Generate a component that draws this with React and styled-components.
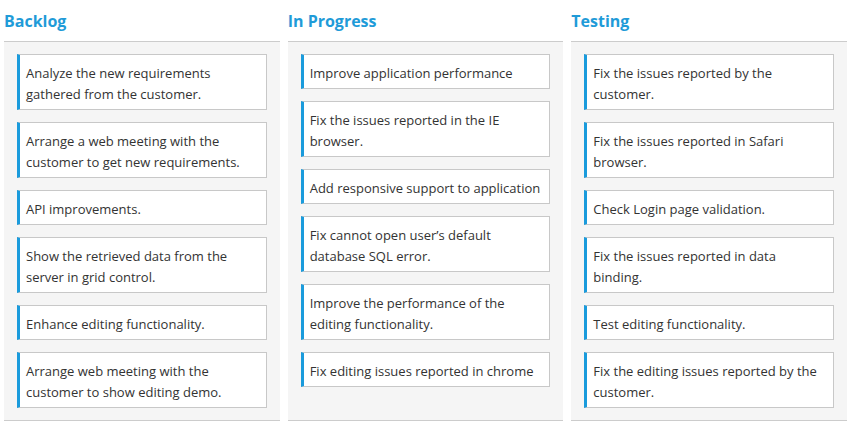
import React from "react";
import styled, { createGlobalStyle } from "styled-components";

const GlobalStyle = createGlobalStyle`
  body {
    margin: 0;
    background: #ffffff;
    font-family: "Open Sans", "Noto Sans", sans-serif;
  }
`;

const Board = styled.div`
  display: grid;
  grid-template-columns: repeat(3, 1fr);
  column-gap: 8px;
  padding: 0 4px;
`;

const Column = styled.section`
  display: flex;
  flex-direction: column;
  min-width: 0;
`;

const Header = styled.h3`
  margin: 0;
  height: 41px;
  padding-top: 10px;
  box-sizing: border-box;
  font-size: 16px;
  line-height: 22px;
  font-weight: 700;
  color: #1f9bd8;
`;

const Body = styled.div`
  background-color: #f5f5f5;
  border-top: 1px solid #cccccc;
  border-bottom: 1px solid #cccccc;
  height: 380px;
  box-sizing: border-box;
  padding: 12px 13px 12px 13px;
  display: flex;
  flex-direction: column;
  gap: 12px;
`;

const Card = styled.div`
  background-color: #ffffff;
  border: 1px solid #c8c8c8;
  border-left: 3px solid #1a9bdc;
  padding: 8px 8px 4px 6px;
  font-size: 13px;
  line-height: 21px;
  color: #333333;
`;

const columns = [
  {
    title: "Backlog",
    cards: [
      "Analyze the new requirements gathered from the customer.",
      "Arrange a web meeting with the customer to get new requirements.",
      "API improvements.",
      "Show the retrieved data from the server in grid control.",
      "Enhance editing functionality.",
      "Arrange web meeting with the customer to show editing demo.",
    ],
  },
  {
    title: "In Progress",
    cards: [
      "Improve application performance",
      "Fix the issues reported in the IE browser.",
      "Add responsive support to application",
      "Fix cannot open user\u2019s default database SQL error.",
      "Improve the performance of the editing functionality.",
      "Fix editing issues reported in chrome",
    ],
  },
  {
    title: "Testing",
    cards: [
      "Fix the issues reported by the customer.",
      "Fix the issues reported in Safari browser.",
      "Check Login page validation.",
      "Fix the issues reported in data binding.",
      "Test editing functionality.",
      "Fix the editing issues reported by the customer.",
    ],
  },
];

export default function App() {
  return (
    <>
      <GlobalStyle />
      <Board>
        {columns.map((col) => (
          <Column key={col.title}>
            <Header>{col.title}</Header>
            <Body>
              {col.cards.map((text) => (
                <Card key={text}>{text}</Card>
              ))}
            </Body>
          </Column>
        ))}
      </Board>
    </>
  );
}
